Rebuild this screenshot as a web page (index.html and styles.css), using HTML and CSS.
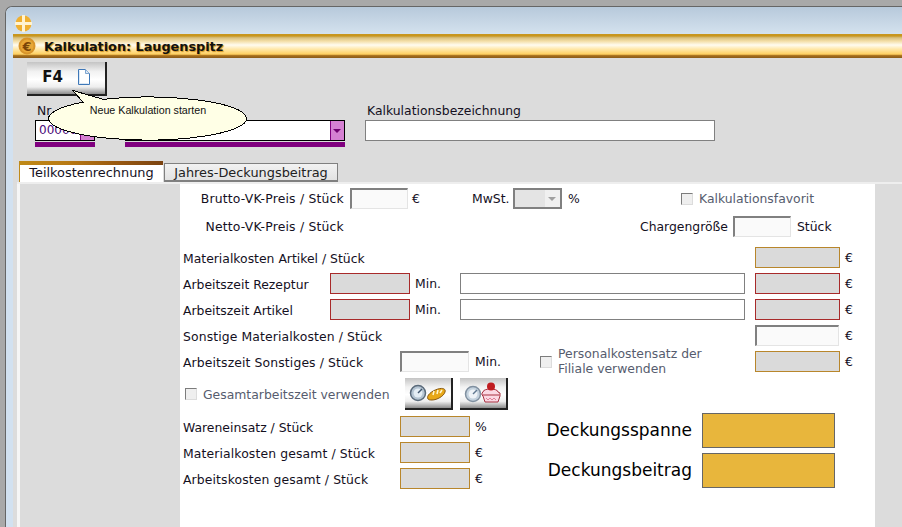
FILE: index.html
```html
<!DOCTYPE html>
<html lang="de">
<head>
    <meta charset="UTF-8">
    <title>Kalkulation: Laugenspitz</title>
    <link rel="stylesheet" href="styles.css">
</head>
<body>
    <div class="window">
        <div class="titlebar">
            <svg class="app-icon" width="17" height="17" viewBox="0 0 17 17">
                <circle cx="8.5" cy="8.5" r="8" fill="#f0b030"/>
                <path d="M7 0h3v7h7v3h-7v7H7v-7H0V7h7z" fill="#fff3d0"/>
            </svg>
        </div>
        <div class="caption">
            <svg class="euro-icon" width="18" height="18" viewBox="0 0 18 18">
                <circle cx="9" cy="9" r="8.5" fill="#d8942a"/>
                <circle cx="9" cy="9" r="6.5" fill="#e8a838"/>
                <text x="9" y="13.5" text-anchor="middle" class="euro-glyph">€</text>
            </svg>
            <h1>Kalkulation: Laugenspitz</h1>
        </div>

        <div class="content">
            <div class="toolbar">
                <button class="tool-btn f4-btn" type="button">
                    <span>F4</span>
                    <svg width="12" height="16" viewBox="0 0 12 16">
                        <path d="M.5.5h7l4 4v11H.5z" fill="#fff" stroke="#3f78b8"/>
                        <path d="M7.5.5v4h4" fill="#dbe8f5" stroke="#7fa6d0"/>
                        <path d="M1.5 1.5v13h9" fill="none" stroke="#dbe8f5"/>
                    </svg>
                </button>
            </div>

            <div class="head-fields">
                <div class="field nr">
                    <label>Nr.</label>
                    <div class="combo"><span class="combo-text">00000</span><span class="combo-btn"></span></div>
                    <div class="required-bar"></div>
                </div>
                <div class="field artikel">
                    <label>&nbsp;</label>
                    <div class="combo"><span class="combo-text"></span><span class="combo-btn"></span></div>
                    <div class="required-bar"></div>
                </div>
                <div class="field bezeichnung">
                    <label>Kalkulationsbezeichnung</label>
                    <input class="in plain" type="text">
                </div>
            </div>

            <div class="tabs">
                <div class="tab active">Teilkostenrechnung</div>
                <div class="tab">Jahres-Deckungsbeitrag</div>
            </div>

            <div class="tab-body">
                <div class="side"></div>
                <div class="panel">
                    <div class="row r-brutto">
                        <span class="lbl right w-161">Brutto-VK-Preis / Stück</span>
                        <input class="in sunken w-58 ml-6" type="text" disabled>
                        <span class="unit ml-4 w-60">€</span>
                        <span class="unit w-41">MwSt.</span>
                        <span class="select"><span class="select-btn"></span></span>
                        <span class="unit ml-6 w-113">%</span>
                        <input class="check" type="checkbox" disabled>
                        <span class="off ml-6">Kalkulationsfavorit</span>
                    </div>
                    <div class="row r-netto">
                        <span class="lbl right w-161">Netto-VK-Preis / Stück</span>
                        <span class="lbl right w-384 tight">Chargengröße</span>
                        <input class="in sunken w-58 ml-5" type="text" disabled>
                        <span class="unit ml-6">Stück</span>
                    </div>

                    <div class="row">
                        <span class="lbl w-572">Materialkosten Artikel / Stück</span>
                        <input class="in gold w-85" type="text" disabled>
                        <span class="unit ml-5">€</span>
                    </div>
                    <div class="row">
                        <span class="lbl w-147">Arbeitszeit Rezeptur</span>
                        <input class="in red w-80" type="text" disabled>
                        <span class="unit ml-5 w-45">Min.</span>
                        <input class="in plain w-285" type="text">
                        <input class="in red w-85 ml-10" type="text" disabled>
                        <span class="unit ml-5">€</span>
                    </div>
                    <div class="row">
                        <span class="lbl w-147">Arbeitszeit Artikel</span>
                        <input class="in red w-80" type="text" disabled>
                        <span class="unit ml-5 w-45">Min.</span>
                        <input class="in plain w-285" type="text">
                        <input class="in red w-85 ml-10" type="text" disabled>
                        <span class="unit ml-5">€</span>
                    </div>
                    <div class="row">
                        <span class="lbl w-572 wide">Sonstige Materialkosten / Stück</span>
                        <input class="in sunken w-84" type="text" disabled>
                        <span class="unit ml-6">€</span>
                    </div>
                    <div class="row">
                        <span class="lbl w-217 wide">Arbeitszeit Sonstiges / Stück</span>
                        <input class="in sunken w-69" type="text" disabled>
                        <span class="unit ml-6 w-65">Min.</span>
                        <input class="check" type="checkbox" disabled>
                        <span class="off two-lines">Personalkostensatz der<br>Filiale verwenden</span>
                        <input class="in gold w-85" type="text" disabled>
                        <span class="unit ml-5">€</span>
                    </div>

                    <div class="row r-gesamt">
                        <input class="check ml-2" type="checkbox" disabled>
                        <span class="off ml-6 w-202">Gesamtarbeitszeit verwenden</span>
                        <button class="tool-btn time-btn" type="button">
                            <svg width="38" height="18" viewBox="0 0 38 18">
                                <circle cx="9" cy="9" r="7.5" fill="#b4c4d2" stroke="#5a6a7a" stroke-width="1.5"/>
                                <circle cx="9" cy="9" r="4.5" fill="#e4edf4"/>
                                <path d="M9 9l4-4" stroke="#40566e" stroke-width="1.5"/>
                                <path d="M19 15c-2-3 3-8 10-10 5-1.5 8 0 7 3-1 4-8 8-13 8-2 0-3 0-4-1z" fill="#e8a818" stroke="#8a5a10"/>
                                <path d="M25 7l-1 4M29 6l-1 4M33 6l-2 3" stroke="#fff6d0" stroke-width="1.5"/>
                            </svg>
                        </button>
                        <button class="tool-btn time-btn ml-7" type="button">
                            <svg width="38" height="22" viewBox="0 0 38 22">
                                <circle cx="9" cy="12" r="7.5" fill="#c4d2de" stroke="#8090a0" stroke-width="1.5"/>
                                <circle cx="9" cy="12" r="4.5" fill="#eef3f7"/>
                                <path d="M9 12l4-4" stroke="#607890" stroke-width="1.5"/>
                                <path d="M19 10c0-4 15-4 15 0l2 1v3l-2 6H21l-2-6-1-1v-2z" fill="#fbd8e4" stroke="#a83040"/>
                                <circle cx="27" cy="4.5" r="4" fill="#c01c20"/>
                                <path d="M18.5 13h17" stroke="#a83040"/>
                                <path d="M22 16l2 2 2-2 2 2 2-2 2 2" fill="none" stroke="#e08098"/>
                            </svg>
                        </button>
                    </div>

                    <div class="bottom">
                        <div class="totals">
                            <div class="row">
                                <span class="lbl w-217">Wareneinsatz / Stück</span>
                                <input class="in gold w-70" type="text" disabled>
                                <span class="unit ml-5">%</span>
                            </div>
                            <div class="row">
                                <span class="lbl w-217 wide">Materialkosten gesamt / Stück</span>
                                <input class="in gold w-70" type="text" disabled>
                                <span class="unit ml-5">€</span>
                            </div>
                            <div class="row">
                                <span class="lbl w-217 wide">Arbeitskosten gesamt / Stück</span>
                                <input class="in gold w-70" type="text" disabled>
                                <span class="unit ml-5">€</span>
                            </div>
                        </div>
                        <div class="margins">
                            <div class="margin-row"><span>Deckungsspanne</span><div class="margin-box"></div></div>
                            <div class="margin-row"><span>Deckungsbeitrag</span><div class="margin-box"></div></div>
                        </div>
                    </div>
                </div>
            </div>

            <!-- Sprechblase ueber dem Formular -->
            <div class="bubble">
                <svg width="200" height="52" viewBox="0 0 200 52" shape-rendering="crispEdges">
                    <path d="M25 .5L35 12.2A99 21.5 0 1 0 55 9.3z" fill="#ffffe6" stroke="#000"/>
                </svg>
                <span class="bubble-text">Neue Kalkulation starten</span>
            </div>
        </div>
    </div>
</body>
</html>
```

FILE: styles.css
```css
* {
    box-sizing: border-box;
}

html, body {
    height: 527px;
    overflow: hidden;
}

body {
    margin: 0;
    padding: 6px 0 0 5px;
    background: #a9a9a9;
    font-family: "DejaVu Sans", Verdana, sans-serif;
    font-size: 12.4px;
    color: #14101e;
}

.window {
    height: 521px;
    padding-left: 7px;
    background: #d2e1f0;
    border-left: 1px solid #666;
    border-top: 1px solid #666;
    border-top-left-radius: 7px;
}

.titlebar {
    height: 27px;
    margin-left: -7px;
    padding: 8px 0 0 9px;
    background: linear-gradient(#b7c9db, #d4e2ee);
    border-top-left-radius: 7px;
}

.app-icon {
    display: block;
}

.caption {
    display: flex;
    align-items: center;
    height: 24px;
    padding-left: 5px;
    background: linear-gradient(#c8961e 0, #c8961e 8%, #d8c080 16%, #f4dfa8 30%, #fffbf0 46%, #ffe9ae 62%, #ffd060 84%, #a8701c 90%, #8a5a18 100%);
}

.euro-icon {
    display: block;
}

.euro-glyph {
    font-family: "DejaVu Sans", sans-serif;
    font-size: 13px;
    font-weight: bold;
    fill: #7a4408;
}

.caption h1 {
    margin: 0 0 0 8px;
    font-size: 12.8px;
    font-weight: bold;
    color: #111;
    text-shadow: 1px 1px 1px #d09020;
}

.content {
    position: relative;
    height: 470px;
    background: #dcdcdc;
}

.toolbar {
    height: 45px;
    padding: 4px 0 0 14px;
}

.tool-btn {
    display: flex;
    align-items: center;
    justify-content: center;
    padding: 0;
    background: linear-gradient(#c4c4c4, #f2f2f2 30%, #fff 55%, #eee 78%, #8c8c8c);
    border: none;
    border-right: 2px solid #222;
    border-bottom: 2px solid #222;
}

.f4-btn {
    width: 80px;
    height: 34px;
    gap: 15px;
    padding-bottom: 2px;
    font-family: "DejaVu Sans", sans-serif;
    font-size: 15px;
    font-weight: bold;
    color: #111;
}

.head-fields {
    display: flex;
    height: 58px;
    padding-left: 22px;
}

.field label {
    display: block;
    height: 17px;
    padding-left: 2px;
    line-height: 15px;
}

.nr {
    width: 60px;
}

.artikel {
    width: 220px;
    margin-left: 30px;
}

.bezeichnung {
    width: 350px;
    margin-left: 20px;
}

.bezeichnung input {
    width: 350px;
}

.combo {
    display: flex;
    height: 21px;
    background: #fff;
    border: 1px solid #000;
}

.combo-text {
    flex: 1;
    padding: 2px 0 0 3px;
    color: #4a0a7a;
    font-size: 12px;
    overflow: hidden;
}

.combo-btn {
    position: relative;
    width: 14px;
    background: #d580d2;
    border-left: 1px solid #80007f;
}

.combo-btn::after {
    content: "";
    position: absolute;
    left: 2px;
    top: 8px;
    border: 4px solid transparent;
    border-top: 4px solid #700070;
    border-bottom: none;
}

.required-bar {
    height: 5px;
    margin-top: 1px;
    background: #80007f;
}

.tabs {
    display: flex;
    align-items: flex-end;
    height: 21px;
    padding-left: 6px;
}

.tab {
    width: 174px;
    height: 19px;
    margin-left: 1px;
    text-align: center;
    font-size: 12.9px;
    line-height: 17px;
    background: linear-gradient(#f2f2f2, #e2e2e2);
    border: 1px solid #808080;
    border-bottom-width: 2px;
    color: #222;
}

.tab.active {
    width: 144px;
    height: 21px;
    margin-left: 0;
    line-height: 16px;
    background: #fff;
    border: none;
    border-left: 1px solid #808080;
    border-top: 4px solid;
    border-image: linear-gradient(90deg, #c08a18, #b87a14 33%, #9a5a10 66%, #7a4210) 1;
    color: #14101e;
}

.tab-body {
    display: flex;
    height: 350px;
    margin-left: 4px;
    padding-top: 2px;
    background: linear-gradient(#eee, #eee 2px, transparent 2px);
}

.side {
    width: 163px;
    border-left: 3px solid #f6f6f6;
}

.panel {
    width: 695px;
    padding: 4px 0 0 3px;
    background: #fff;
}

.row {
    display: flex;
    align-items: center;
    height: 21px;
    margin-bottom: 5px;
}

.r-brutto {
    margin-bottom: 7px;
}

.r-netto {
    margin-bottom: 10px;
}

.r-gesamt {
    height: 32px;
    margin-top: 6px;
    margin-bottom: 3px;
}

.lbl {
    flex: none;
    padding-top: 1px;
    white-space: nowrap;
}

.right {
    padding-top: 0;
    text-align: right;
    letter-spacing: .2px;
}

.tight {
    letter-spacing: 0;
}

.wide {
    letter-spacing: .12px;
}

.unit {
    flex: none;
    margin-top: -1px;
    white-space: nowrap;
}

.off {
    flex: none;
    color: #565c6e;
    white-space: nowrap;
}

.two-lines {
    width: 197px;
    margin-top: -2px;
    margin-left: 6px;
    line-height: 15px;
}

.in {
    flex: none;
    height: 21px;
    margin: 0;
    padding: 0;
    border-radius: 0;
}

.plain {
    background: #fff;
    border: 1px solid #808080;
}

.sunken {
    background: #fafafa;
    border: solid;
    border-width: 2px 1px 1px 2px;
    border-color: #808080 #e4e4e4 #e4e4e4 #808080;
}

.gold {
    background: #dadada;
    border: 1px solid #b8862b;
}

.red {
    background: #dadada;
    border: 1px solid #a82a2a;
}

.check {
    flex: none;
    appearance: none;
    width: 12px;
    height: 12px;
    margin: 0;
    background: #efefef;
    border: 1px solid;
    border-color: #7c7c7c #dcdcdc #dcdcdc #7c7c7c;
}

.select {
    flex: none;
    display: flex;
    justify-content: flex-end;
    width: 49px;
    height: 21px;
    background: #e4e4e4;
    border: 2px solid #808080;
}

.select-btn {
    position: relative;
    width: 15px;
    background: #f0f0f0;
}

.select-btn::after {
    content: "";
    position: absolute;
    left: 3px;
    top: 7px;
    border: 4px solid transparent;
    border-top: 4px solid #a0a0a0;
    border-bottom: none;
}

.time-btn {
    flex: none;
    width: 48px;
    height: 32px;
}

.bottom {
    display: flex;
}

.totals {
    width: 357px;
    padding-top: 3px;
}

.margins {
    display: flex;
    flex-direction: column;
    gap: 5px;
    width: 295px;
}

.margin-row {
    display: flex;
    align-items: center;
    justify-content: flex-end;
    gap: 10px;
    font-size: 17px;
    color: #000;
}

.margin-row span {
    padding-bottom: 2px;
}

.margin-box {
    width: 133px;
    height: 35px;
    background: #e8b63c;
    border: 1px solid #666;
}

.bubble {
    position: absolute;
    left: 35px;
    top: 32px;
    width: 200px;
    height: 52px;
}

.bubble svg {
    display: block;
}

.bubble-text {
    position: absolute;
    left: 0;
    right: 0;
    top: 14px;
    text-align: center;
    font-family: "Liberation Sans", Arial, sans-serif;
    font-size: 10.7px;
    color: #111;
}

/* Breiten und Abstaende */
.w-41 { width: 41px; }
.w-45 { width: 45px; }
.w-58 { width: 58px; }
.w-60 { width: 60px; }
.w-65 { width: 65px; }
.w-69 { width: 69px; }
.w-70 { width: 70px; }
.w-80 { width: 80px; }
.w-84 { width: 84px; }
.w-85 { width: 85px; }
.w-113 { width: 113px; }
.w-147 { width: 147px; }
.w-161 { width: 161px; }
.w-202 { width: 202px; }
.w-217 { width: 217px; }
.w-285 { width: 285px; }
.w-384 { width: 384px; }
.w-572 { width: 572px; }

.ml-2 { margin-left: 2px; }
.ml-4 { margin-left: 4px; }
.ml-5 { margin-left: 5px; }
.ml-6 { margin-left: 6px; }
.ml-7 { margin-left: 7px; }
.ml-10 { margin-left: 10px; }
```
